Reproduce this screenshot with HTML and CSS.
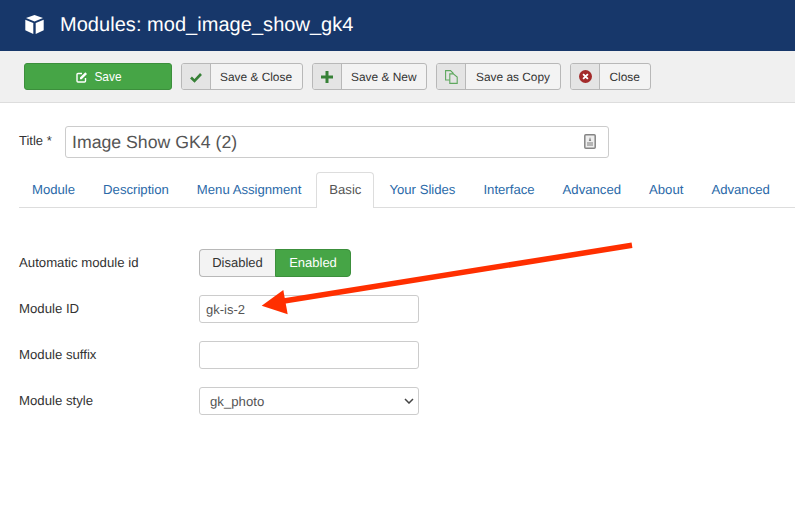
FILE: index.html
```html
<!DOCTYPE html>
<html lang="en">
<head>
<meta charset="utf-8">
<title>Modules: mod_image_show_gk4</title>
<link rel="stylesheet" href="styles.css">
</head>
<body>
<header class="topbar">
  <svg class="cube" viewBox="0 0 19 19" width="19" height="19"><path d="M9.500 0 18 3 9.500 6.400 1 3Z"/><path d="M.3 4.800 8.300 8V19L.3 15.300Z"/><path d="M18.700 4.800 10.700 8V19L18.700 15.300Z"/></svg>
  <h1>Modules: mod_image_show_gk4</h1>
</header>
<div class="toolbar">
  <button class="btn btn-save"><svg viewBox="0 0 12 12" width="12" height="12"><path d="M9.500 7v3a1 1 0 0 1-1 1H2a1 1 0 0 1-1-1V3.500a1 1 0 0 1 1-1h4" fill="none" stroke="#fff" stroke-width="1.400"/><path d="M4 6.500 9.300 1.200 11 2.900 5.700 8.200H4Z" fill="#fff"/></svg>Save</button>
  <div class="btn-split"><span class="ico"><svg viewBox="0 0 12 12" width="12" height="12"><path d="M1 6.500 4.500 10 11 3" fill="none" stroke="#378137" stroke-width="2.600"/></svg></span><span class="lbl">Save &amp; Close</span></div>
  <div class="btn-split"><span class="ico"><svg viewBox="0 0 12 12" width="12" height="12"><path d="M4.500 0h3v4.500H12v3H7.500V12h-3V7.500H0v-3h4.500Z" fill="#378137"/></svg></span><span class="lbl lbl-wide">Save &amp; New</span></div>
  <div class="btn-split"><span class="ico"><svg viewBox="0 0 13 14" width="13" height="14"><path d="M.6.600h4.900L8 3.100V10H.6Z" fill="none" stroke="#5fa85f" stroke-width="1.100"/><path d="M4.800 3.900h3.500l3.900 3.100v6.400H4.800Z" fill="#e4e4e4" stroke="#5fa85f" stroke-width="1.100"/></svg></span><span class="lbl lbl-wide">Save as Copy</span></div>
  <div class="btn-split"><span class="ico"><svg viewBox="0 0 12 12" width="13" height="13"><circle cx="6" cy="6" r="6" fill="#a32a2a"/><path d="M3.800 3.800 8.200 8.200M8.200 3.800 3.800 8.200" stroke="#fff" stroke-width="1.700"/></svg></span><span class="lbl lbl-wide">Close</span></div>
</div>
<main class="content">
  <div class="title-row">
    <label class="title-label">Title *</label>
    <div class="title-field">
      <input class="title-input" type="text" value="Image Show GK4 (2)">
      <svg class="badge" viewBox="0 0 12 15" width="12" height="15"><rect x=".8" y=".8" width="10.400" height="13.400" rx="1" fill="#eee" stroke="#858585" stroke-width="1.500"/><path d="M6 3 7.200 7H4.800Z" fill="#858585"/><rect x="3" y="8" width="6" height="4" fill="#b5b5b5"/></svg>
    </div>
  </div>
  <nav class="tabs">
    <a>Module</a><a>Description</a><a>Menu Assignment</a><a class="active">Basic</a><a>Your Slides</a><a>Interface</a><a>Advanced</a><a>About</a><a>Advanced</a>
  </nav>
  <form class="fields">
    <div class="row">
      <label>Automatic module id</label>
      <div class="toggle"><span class="off">Disabled</span><span class="on">Enabled</span></div>
    </div>
    <div class="row">
      <label>Module ID</label>
      <input class="field" type="text" value="gk-is-2">
    </div>
    <div class="row">
      <label>Module suffix</label>
      <input class="field" type="text">
    </div>
    <div class="row">
      <label>Module style</label>
      <div class="select">gk_photo<svg viewBox="0 0 10 6" width="10" height="6"><path d="M1 1 5 5 9 1" fill="none" stroke="#444" stroke-width="1.500"/></svg></div>
    </div>
  </form>
</main>
<svg class="arrow" viewBox="0 0 795 512" width="795" height="512"><path d="M632 245.300 284 301" stroke="#ff2f00" stroke-width="5.500" fill="none"/><path d="M261.700 305.700 283.300 290 287.700 314.300Z" fill="#ff2f00"/></svg>
</body>
</html>
```
FILE: styles.css
```css
* { box-sizing: border-box; }
html, body { margin: 0; height: 100%; overflow: hidden; }
body { width: 795px; height: 512px; background: #fff; color: #333; font-family: "Liberation Sans", Arial, sans-serif; font-size: 13.200px; position: relative; text-rendering: geometricPrecision; }

.topbar { height: 51px; background: #17376a; display: flex; align-items: center; padding: 0 0 0 25px; color: #fff; }
.cube { fill: #fff; flex: none; margin-top: -3px; }
.topbar h1 { margin: -1px 0 0 16px; font-size: 20px; font-weight: 400; line-height: 1; letter-spacing: .04px; }

.toolbar { height: 52px; background: #f0f0f0; border-bottom: 1px solid #ddd; padding: 12px 0 0 24px; display: flex; align-items: flex-start; gap: 9px; }
.btn { font: inherit; font-size: 11.900px; height: 27px; }
.btn-save { width: 148px; background: #46a546; color: #fff; border: 1px solid #3c8f3c; border-radius: 3px; display: flex; align-items: center; justify-content: center; gap: 6px; padding: 0 0 0 2px; }
.btn-split { height: 27px; display: flex; border: 1px solid #b8b8b8; border-radius: 3px; background: #f3f3f3; font-size: 11.900px; overflow: hidden; }
.ico { width: 29px; background: #e4e4e4; border-right: 1px solid #b8b8b8; display: flex; align-items: center; justify-content: center; }
.lbl { padding: 0 9.500px 0 9px; display: flex; align-items: center; color: #333; }
.lbl-wide { padding: 0 10px 0 9.500px; }

.content { padding: 23px 0 0 19px; }
.title-row { display: flex; align-items: flex-start; }
.title-label { width: 46px; padding-top: 7px; font-size: 13px; }
.title-field { position: relative; width: 544px; height: 32px; }
.title-input { width: 100%; height: 100%; border: 1px solid #ccc; border-radius: 3px; padding: 0 6px; font: 17.700px "Liberation Sans", Arial, sans-serif; color: #555; outline: none; text-rendering: geometricPrecision; }
.badge { position: absolute; right: 13px; top: 8px; }

.tabs { display: flex; height: 36px; margin-top: 14px; border-bottom: 1px solid #ddd; font-size: 13.150px; }
.tabs a { padding: 9px 12px 0; margin-right: 2px; color: #2a69a8; line-height: 15px; border: 1px solid transparent; border-bottom: 0; white-space: nowrap; }
.tabs a.active { color: #555; background: #fff; border-color: #ddd; border-radius: 4px 4px 0 0; height: 36px; }

.fields { padding-top: 41px; }
.row { display: flex; align-items: center; height: 28px; margin-bottom: 18px; }
.row label { width: 180px; padding-bottom: 2px; }
.toggle { display: flex; height: 28px; font-size: 13px; }
.toggle span { display: flex; align-items: center; justify-content: center; width: 76px; border: 1px solid #b8b8b8; padding-bottom: 1px; }
.off { background: #f3f3f3; border-radius: 4px 0 0 4px; border-right: 0 !important; }
.on { background: #46a546; color: #fff; border-color: #3c8f3c !important; border-radius: 0 4px 4px 0; }
.field { width: 220px; height: 28px; border: 1px solid #ccc; border-radius: 3px; padding: 0 6px; font: 13px "Liberation Sans", Arial, sans-serif; color: #555; outline: none; text-rendering: geometricPrecision; }
.select { width: 220px; height: 28px; border: 1px solid #ccc; border-radius: 3px; padding: 0 4px 0 10px; color: #555; display: flex; align-items: center; justify-content: space-between; }

.arrow { position: absolute; left: 0; top: 0; pointer-events: none; }
```
